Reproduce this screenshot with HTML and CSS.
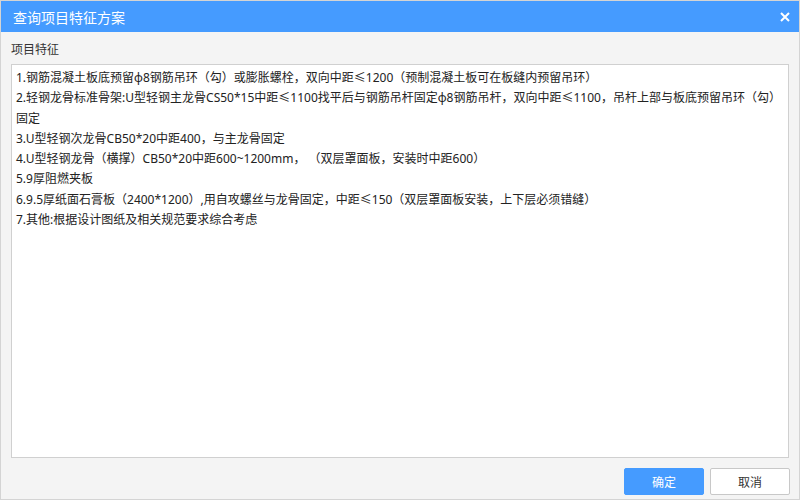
FILE: index.html
```html
<!DOCTYPE html>
<html lang="zh-CN">
<head>
  <meta charset="UTF-8">
  <title>查询项目特征方案</title>
  <link rel="stylesheet" href="styles.css">
</head>
<body>
  <div class="dialog">
    <div class="title-bar">
      <span class="title">查询项目特征方案</span>
      <svg class="close" width="10" height="10" viewBox="0 0 10 10">
        <path d="M1 1 L9 9 M9 1 L1 9" stroke="#fff" stroke-width="2" fill="none"/>
      </svg>
    </div>

    <div class="content">
      <div class="field-label">项目特征</div>
      <div class="feature-box">
        <div class="line">1.钢筋混凝土板底预留ф8钢筋吊环（勾）或膨胀螺栓，双向中距≤1200（预制混凝土板可在板缝内预留吊环）</div>
        <div class="line">2.轻钢龙骨标准骨架:U型轻钢主龙骨CS50*15中距≤1100找平后与钢筋吊杆固定ф8钢筋吊杆，双向中距≤1100，吊杆上部与板底预留吊环（勾）</div>
        <div class="line">固定</div>
        <div class="line">3.U型轻钢次龙骨CB50*20中距400，与主龙骨固定</div>
        <div class="line">4.U型轻钢龙骨（横撑）CB50*20中距600~1200mm， （双层罩面板，安装时中距600）</div>
        <div class="line">5.9厚阻燃夹板</div>
        <div class="line">6.9.5厚纸面石膏板（2400*1200）,用自攻螺丝与龙骨固定，中距≤150（双层罩面板安装，上下层必须错缝）</div>
        <div class="line">7.其他:根据设计图纸及相关规范要求综合考虑</div>
      </div>
    </div>

    <div class="footer">
      <button class="btn btn-primary">确定</button>
      <button class="btn">取消</button>
    </div>
  </div>
</body>
</html>
```

FILE: styles.css
```css
body {
  margin: 0;
  font-family: "Noto Sans", "Noto Sans CJK SC", sans-serif;
  background: #fff;
}

.dialog {
  width: 800px;
  height: 500px;
  box-sizing: border-box;
  border: 1px solid #d4d4d4;
  background: #f4f4f4;
  display: flex;
  flex-direction: column;
}

.title-bar {
  height: 31px;
  background: #459bff;
  display: flex;
  align-items: center;
  justify-content: space-between;
  padding: 0 9px 0 12px;
}

.title {
  color: #fff;
  font-size: 14px;
}

.close {
  display: block;
}

.content {
  flex: 1;
  display: flex;
  flex-direction: column;
  padding: 10px 10px 0 10px;
}

.field-label {
  font-size: 12px;
  line-height: 16px;
  color: #333;
  margin-bottom: 6px;
}

.feature-box {
  flex: 1;
  background: #fff;
  border: 1px solid #d0d0d0;
  padding: 3px 4px;
  font-size: 12px;
  line-height: 20.3px;
  color: #222;
}

.line {
  white-space: pre;
}

.footer {
  display: flex;
  justify-content: flex-end;
  gap: 6px;
  padding: 10px 9px 4px 0;
}

.btn {
  width: 80px;
  height: 27px;
  border: 1px solid #c8c8c8;
  border-radius: 2px;
  background: #fff;
  color: #333;
  font-family: inherit;
  font-size: 12px;
  cursor: pointer;
}

.btn-primary {
  background: #459bff;
  border-color: #459bff;
  color: #fff;
}
```
